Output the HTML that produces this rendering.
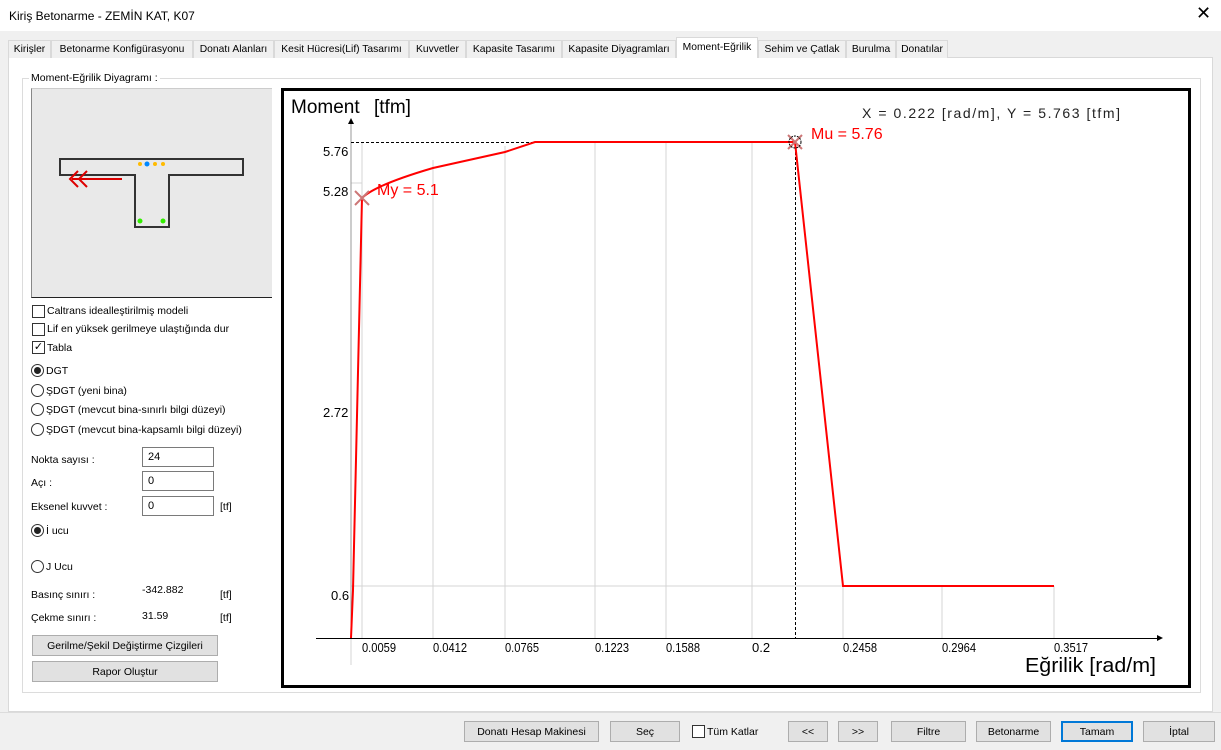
<!DOCTYPE html>
<html><head><meta charset="utf-8"><style>
*{box-sizing:border-box}
body{margin:0;width:1221px;height:750px;background:#f0f0f0;font-family:"Liberation Sans",sans-serif;font-size:10.5px;color:#000;position:relative;overflow:hidden}
.a{position:absolute;white-space:nowrap}
.tab{position:absolute;top:40px;height:18px;border:1px solid #d9d9d9;border-bottom:none;background:#f0f0f0;padding-top:3px;font-size:10.3px;white-space:nowrap;text-align:center;overflow:hidden}
.tab.act{top:37px;height:21px;background:#fff;padding-top:4px}
.cb{position:absolute;width:13px;height:13px;border:1px solid #333;background:#fff}
.rb{position:absolute;width:13px;height:13px;border:1px solid #333;border-radius:50%;background:#fff}
.rb.on::after{content:"";position:absolute;left:2px;top:2px;width:7px;height:7px;border-radius:50%;background:#222}
.inp{position:absolute;height:20px;border:1px solid #7a7a7a;background:#fff;padding:3px 5px;font-size:11px}
.btn{position:absolute;height:21px;border:1px solid #adadad;background:#e1e1e1;text-align:center;padding-top:4px;font-size:10.5px;white-space:nowrap}
</style></head><body>
<div class="a" style="left:0;top:0;width:1221px;height:31px;background:#fff"></div>
<div class="a" style="left:9px;top:9px;font-size:12px">Kiriş Betonarme - ZEMİN KAT, K07</div>
<div class="a" style="left:1196px;top:3px;font-size:18px">✕</div>

<div class="a" style="left:8px;top:57px;width:1205px;height:655px;background:#fff;border:1px solid #d9d9d9"></div>
<div class="tab" style="left:8px;width:43px">Kirişler</div>
<div class="tab" style="left:51px;width:142px">Betonarme Konfigürasyonu</div>
<div class="tab" style="left:193px;width:81px">Donatı Alanları</div>
<div class="tab" style="left:274px;width:135px">Kesit Hücresi(Lif) Tasarımı</div>
<div class="tab" style="left:409px;width:57px">Kuvvetler</div>
<div class="tab" style="left:466px;width:96px">Kapasite Tasarımı</div>
<div class="tab" style="left:562px;width:114px">Kapasite Diyagramları</div>
<div class="tab act" style="left:676px;width:82px">Moment-Eğrilik</div>
<div class="tab" style="left:758px;width:88px">Sehim ve Çatlak</div>
<div class="tab" style="left:846px;width:50px">Burulma</div>
<div class="tab" style="left:896px;width:52px">Donatılar</div>

<div class="a" style="left:22px;top:78px;width:1179px;height:615px;border:1px solid #dcdcdc"></div>
<div class="a" style="left:29px;top:72px;background:#fff;padding:0 2px">Moment-Eğrilik Diyagramı :</div>

<div class="a" style="left:31px;top:88px;width:241px;height:210px;background:#e9e9e9;border-left:1px solid #888;border-top:1px solid #ccc;border-bottom:1px solid #222"></div>
<svg class="a" style="left:30px;top:90px" width="240" height="208">
<path d="M30 69H213V85H139V137H105V85H30Z" fill="none" stroke="#333" stroke-width="2"/>
<line x1="92" y1="89" x2="42" y2="89" stroke="#d00" stroke-width="2"/>
<path d="M48 81L40 89L48 97M57 81L49 89L57 97" fill="none" stroke="#d00" stroke-width="2"/>
<circle cx="110" cy="74" r="2" fill="#fb0"/><circle cx="117" cy="74" r="2.5" fill="#08f"/><circle cx="125" cy="74" r="2" fill="#fb0"/><circle cx="133" cy="74" r="2" fill="#fb0"/>
<circle cx="110" cy="131" r="2.5" fill="#3e0"/><circle cx="133" cy="131" r="2.5" fill="#3e0"/>
</svg>

<div class="cb" style="left:32px;top:305px"></div><div class="a" style="left:47px;top:305px">Caltrans idealleştirilmiş modeli</div>
<div class="cb" style="left:32px;top:323px"></div><div class="a" style="left:47px;top:323px">Lif en yüksek gerilmeye ulaştığında dur</div>
<div class="cb" style="left:32px;top:341px;font-size:11px;line-height:11px;text-align:center">✓</div><div class="a" style="left:47px;top:342px">Tabla</div>
<div class="rb on" style="left:31px;top:364px"></div><div class="a" style="left:46px;top:365px">DGT</div>
<div class="rb" style="left:31px;top:384px"></div><div class="a" style="left:46px;top:385px">ŞDGT (yeni bina)</div>
<div class="rb" style="left:31px;top:403px"></div><div class="a" style="left:46px;top:404px">ŞDGT (mevcut bina-sınırlı bilgi düzeyi)</div>
<div class="rb" style="left:31px;top:423px"></div><div class="a" style="left:46px;top:424px">ŞDGT (mevcut bina-kapsamlı bilgi düzeyi)</div>
<div class="a" style="left:31px;top:454px">Nokta sayısı :</div><div class="inp" style="left:142px;top:447px;width:72px">24</div>
<div class="a" style="left:31px;top:477px">Açı :</div><div class="inp" style="left:142px;top:471px;width:72px">0</div>
<div class="a" style="left:31px;top:501px">Eksenel kuvvet :</div><div class="inp" style="left:142px;top:496px;width:72px">0</div><div class="a" style="left:220px;top:501px">[tf]</div>
<div class="rb on" style="left:31px;top:524px"></div><div class="a" style="left:46px;top:525px">İ ucu</div>
<div class="rb" style="left:31px;top:560px"></div><div class="a" style="left:46px;top:561px">J Ucu</div>
<div class="a" style="left:31px;top:589px">Basınç sınırı :</div><div class="a" style="left:142px;top:584px">-342.882</div><div class="a" style="left:220px;top:589px">[tf]</div>
<div class="a" style="left:31px;top:612px">Çekme sınırı :</div><div class="a" style="left:142px;top:610px">31.59</div><div class="a" style="left:220px;top:612px">[tf]</div>
<div class="btn" style="left:32px;top:635px;width:186px">Gerilme/Şekil Değiştirme Çizgileri</div>
<div class="btn" style="left:32px;top:661px;width:186px">Rapor Oluştur</div>

<svg class="a" style="left:0;top:0" width="1221" height="750" font-family="Liberation Sans, sans-serif">
<rect x="282.5" y="89.5" width="907" height="597" fill="#fff" stroke="#000" stroke-width="3"/>
<g stroke="#d4d4d4" stroke-width="1">
<line x1="362" y1="142" x2="362" y2="638"/><line x1="433" y1="160" x2="433" y2="638"/><line x1="505" y1="146" x2="505" y2="638"/><line x1="595" y1="142" x2="595" y2="638"/><line x1="666" y1="142" x2="666" y2="638"/><line x1="752" y1="142" x2="752" y2="638"/><line x1="843" y1="586" x2="843" y2="638"/><line x1="942" y1="586" x2="942" y2="638"/><line x1="1054" y1="586" x2="1054" y2="638"/>
<line x1="351" y1="183" x2="362" y2="183"/><line x1="351" y1="586" x2="1054" y2="586"/>
<line x1="351" y1="638" x2="351" y2="665"/>
</g>
<line x1="351" y1="124" x2="351" y2="638" stroke="#999"/>
<path d="M351 118l-3 6h6z" fill="#000"/>
<line x1="316" y1="638.5" x2="1158" y2="638.5" stroke="#000"/>
<path d="M1163 638l-6-3v6z" fill="#000"/>
<line x1="351" y1="142.5" x2="535" y2="142.5" stroke="#000" stroke-dasharray="3,2"/>
<line x1="795.5" y1="142" x2="795.5" y2="638" stroke="#000" stroke-dasharray="3,2"/>
<path d="M351 638L353 590L362 198Q375 185 433 168L505 152L535 142H795L843 586H1054" fill="none" stroke="#f00" stroke-width="2"/>
<path d="M355 191l14 14M369 191l-14 14M788 135l14 14M802 135l-14 14" stroke="#c77" stroke-width="2"/>
<circle cx="795" cy="142" r="6" fill="none" stroke="#000" stroke-dasharray="2,1"/>
<text x="291" y="113" font-size="19">Moment</text><text x="374" y="113" font-size="19">[tfm]</text>
<text x="862" y="118" font-size="14" fill="#222" textLength="258" lengthAdjust="spacing">X = 0.222 [rad/m],  Y = 5.763 [tfm]</text>
<text x="811" y="139" font-size="16" fill="#f00">Mu = 5.76</text>
<text x="377" y="195" font-size="16" fill="#f00">My = 5.1</text>
<g font-size="13"><text x="323" y="156">5.76</text><text x="323" y="196">5.28</text><text x="323" y="417">2.72</text><text x="331" y="600">0.6</text></g>
<g font-size="13"><text x="362" y="652" textLength="34" lengthAdjust="spacingAndGlyphs">0.0059</text><text x="433" y="652" textLength="34" lengthAdjust="spacingAndGlyphs">0.0412</text><text x="505" y="652" textLength="34" lengthAdjust="spacingAndGlyphs">0.0765</text><text x="595" y="652" textLength="34" lengthAdjust="spacingAndGlyphs">0.1223</text><text x="666" y="652" textLength="34" lengthAdjust="spacingAndGlyphs">0.1588</text><text x="752" y="652">0.2</text><text x="843" y="652" textLength="34" lengthAdjust="spacingAndGlyphs">0.2458</text><text x="942" y="652" textLength="34" lengthAdjust="spacingAndGlyphs">0.2964</text><text x="1054" y="652" textLength="34" lengthAdjust="spacingAndGlyphs">0.3517</text></g>
<text x="1025" y="672" font-size="20" textLength="131" lengthAdjust="spacingAndGlyphs">Eğrilik [rad/m]</text>
</svg>

<div class="a" style="left:0;top:712px;width:1221px;height:1px;background:#dcdcdc"></div>
<div class="btn" style="left:464px;top:721px;width:135px">Donatı Hesap Makinesi</div>
<div class="btn" style="left:610px;top:721px;width:70px">Seç</div>
<div class="cb" style="left:692px;top:725px"></div><div class="a" style="left:707px;top:726px">Tüm Katlar</div>
<div class="btn" style="left:788px;top:721px;width:40px">&lt;&lt;</div>
<div class="btn" style="left:838px;top:721px;width:40px">&gt;&gt;</div>
<div class="btn" style="left:891px;top:721px;width:75px">Filtre</div>
<div class="btn" style="left:976px;top:721px;width:75px">Betonarme</div>
<div class="btn" style="left:1061px;top:721px;width:72px;border:2px solid #0078d7;padding-top:3px">Tamam</div>
<div class="btn" style="left:1143px;top:721px;width:72px">İptal</div>
</body></html>
